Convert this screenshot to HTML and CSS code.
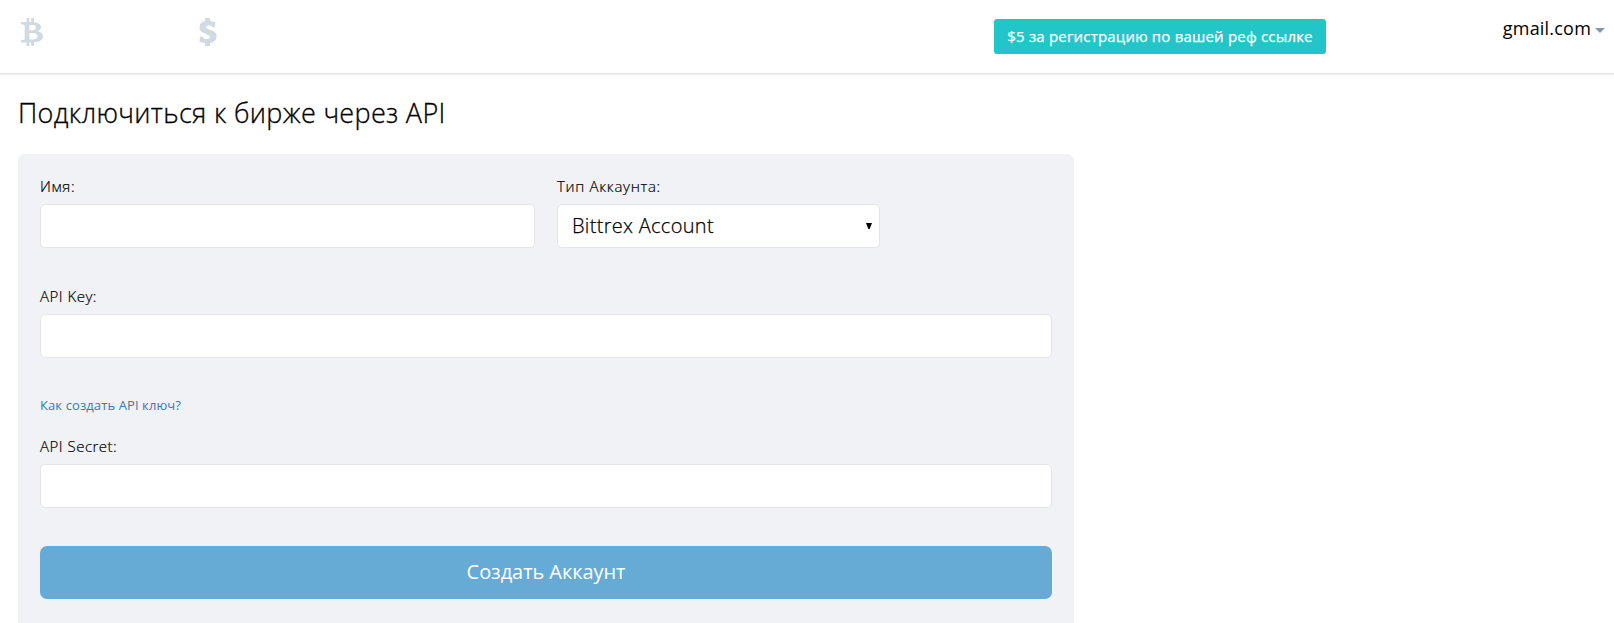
FILE: index.html
```html
<!DOCTYPE html>
<html lang="ru">
<head>
<meta charset="utf-8">
<title>API</title>
<link rel="stylesheet" href="styles.css">
</head>
<body>
<header class="topbar">
  <svg class="icon-btc" viewBox="0 0 22 28" width="22" height="28"><path fill-rule="evenodd" d="M5.5 0H8.4V4H10.2V0H13V4.2C17.5 4.700 20 6.500 20 9C20 11.400 18.600 12.700 16.300 13.300C19.800 13.900 22 15.400 22 18.300C22 22 18.800 24 13 24.300V28H10.200V24.400H8.400V28H5.500V24.400H0V22.200L3.700 21.500V7L0 6.200V4H5.500ZM8.400 7V12.200H11C13.500 12.200 15 11.300 15 9.400C15 7.700 13.700 7 11.300 7ZM8.400 15.100V21.400H11.500C14.500 21.400 16.500 20.500 16.500 18.200C16.500 16.100 14.800 15.100 11.700 15.100Z"/></svg>
  <svg class="icon-usd" viewBox="0 0 18 28" width="18" height="28"><path d="M6 0H11V3C13 3.200 14.800 3.600 16.500 4.400L15.600 9.500H13.400L12.600 7.800C10.200 7 7 7.400 7 9.100C7 10.500 8.700 11 11.200 11.900C15 13.200 17.600 14.700 17.600 18.200C17.600 22 15 24.300 11 24.900V28H6V25.100C4 24.900 2 24.400.3 23.500L1.300 18.400H3.500L4.500 20.600C7.500 21.700 10.800 21 10.800 18.900C10.800 17.400 9.200 16.800 6.800 15.900C3 14.500.5 13 .5 9.600C.5 6 2.500 3.700 6 3.100Z"/></svg>
  <a class="promo">$5 за регистрацию по вашей реф ссылке</a>
  <div class="user"><span class="user-name">gmail.com</span><span class="caret"></span></div>
</header>
<main class="content">
  <h1 class="title"><span>Подключиться к бирже через API</span></h1>
  <form class="panel">
    <div class="row">
      <div class="field field-name"><label class="label"><span>Имя:</span></label><div class="input"></div></div>
      <div class="field field-type"><label class="label"><span>Тип Аккаунта:</span></label>
        <div class="input select"><span class="value">Bittrex Account</span><svg class="arrow" width="6" height="6" viewBox="0 0 6 6"><path d="M0 0H6L3.600 6H2.400Z"/></svg></div></div>
    </div>
    <div class="field field-key"><label class="label"><span>API Key:</span></label><div class="input"></div></div>
    <div class="help"><a class="help-link">Как создать API ключ?</a></div>
    <div class="field field-secret"><label class="label"><span>API Secret:</span></label><div class="input"></div></div>
    <div class="submit"><span>Создать Аккаунт</span></div>
  </form>
</main>
</body>
</html>
```
FILE: styles.css
```css
* { box-sizing: border-box; }
body {
  margin: 0;
  height: 623px;
  overflow: hidden;
  background: #fff;
  color: #000;
  font-family: "Open Sans", "Noto Sans", sans-serif;
}
.topbar {
  display: flex;
  align-items: flex-start;
  height: 74px;
  padding: 18px 9px 0 21px;
  border-bottom: 1px solid #e4e4e4;
  box-shadow: 0 1px 0 #f0f0f0, 0 2px 0 #fafafa;
}
.icon-btc, .icon-usd { fill: #cfdae1; flex: none; }
.icon-usd { margin-left: 156px; }
.promo {
  width: 332px;
  height: 35px;
  margin: 1px 0 0 777px;
  border-radius: 3px;
  background: #23c6c8;
  color: #fff;
  font-size: 15px;
  line-height: 35px;
  letter-spacing: .19px;
  text-align: center;
  white-space: nowrap;
  -webkit-text-stroke: .25px #fff;
}
.user { display: flex; align-items: center; gap: 4px; margin-left: auto; height: 22px; }
.user-name { margin-top: -2px; font-size: 18px; line-height: 22px; letter-spacing: .2px; }
.caret { border: 5px solid transparent; border-top-color: #8399ab; border-bottom: 0; margin-top: 2px; }
.content { padding-left: 18px; }
.title {
  height: 80px;
  margin: 0;
  padding-top: 20px;
  font-size: 27px;
  font-weight: 300;
  line-height: 37px;
  letter-spacing: .31px;
  -webkit-text-stroke: .3px #000;
}
.panel {
  width: 1056px;
  height: 480px;
  padding: 21px 22px 0;
  border-radius: 7px;
  background: #f1f2f6;
}
.row { display: flex; gap: 22px; }
.field-name { width: 495px; }
.field-type { width: 323px; }
.label {
  display: block;
  height: 29px;
  font-size: 15px;
  font-weight: 300;
  line-height: 22px;
  letter-spacing: .5px;
  -webkit-text-stroke: .2px #000;
}
.row .label { letter-spacing: .7px; }
.input {
  display: flex;
  align-items: center;
  height: 44px;
  border: 1px solid #e5e6e9;
  border-radius: 5px;
  background: #fff;
}
.select { justify-content: space-between; padding: 0 7px 0 14px; border-color: #e0e6ea; }
.value {
  font-size: 20px;
  font-weight: 300;
  line-height: 28px;
  letter-spacing: .3px;
  -webkit-text-stroke: .25px #000;
}
.field-key { margin-top: 37px; }
.help { height: 77px; padding-top: 37px; font-size: 13px; line-height: 20px; letter-spacing: .1px; }
.help-link { color: #337ab7; }
.submit {
  height: 53px;
  margin-top: 38px;
  border-radius: 7px;
  background: #66aad6;
  color: #fff;
  font-size: 20px;
  line-height: 52px;
  letter-spacing: -.07px;
  text-align: center;
}
```
